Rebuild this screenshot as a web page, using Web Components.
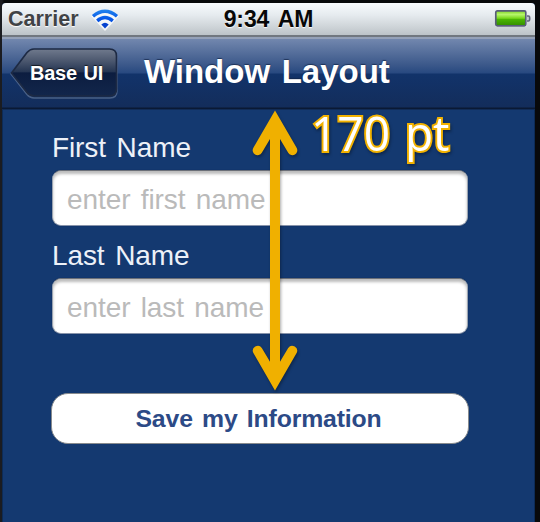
<!DOCTYPE html>
<html lang="en">
<head>
<meta charset="utf-8">
<title>Window Layout</title>
<style>
html,body{margin:0;height:100%;background:#08090b;overflow:hidden}
body{font-family:"Liberation Sans",Arial,sans-serif}
</style>
</head>
<body>
<phone-screen>
  <status-bar slot="status" carrier="Carrier" time="9:34 AM"></status-bar>
  <nav-bar slot="nav"><back-button slot="back">Base UI</back-button>Window Layout</nav-bar>
  <text-field label="First Name" hint="enter first name"></text-field>
  <text-field label="Last Name" hint="enter last name"></text-field>
  <action-button>Save my Information</action-button>
  <measure-arrow slot="overlay">170 pt</measure-arrow>
</phone-screen>
<script>
function define(name, html) {
  customElements.define(name, class extends HTMLElement {
    constructor() {
      super();
      const root = this.attachShadow({mode: "open"});
      const t = document.createElement("template");
      t.innerHTML = html;
      root.appendChild(t.content.cloneNode(true));
      root.querySelectorAll("[data-attr]").forEach(e => {
        e.textContent = this.getAttribute(e.dataset.attr);
      });
    }
  });
}

define("phone-screen", `<style>
:host{display:block;position:relative;box-sizing:border-box;width:540px;height:522px;padding:3px 5px 0 2px;background:linear-gradient(90deg,#1b1c20 0 2px,#08090b 4px)}
.screen{display:flex;flex-direction:column;height:519px;border-radius:4px 4px 0 0;overflow:hidden;background:#143970;box-shadow:inset 1px 0 #0d2b56,inset -1px 0 #0d2b56}
.form{display:flex;flex-direction:column;padding:20px 67px 0 50px}
</style>
<div class="screen"><slot name="status"></slot><slot name="nav"></slot><div class="form"><slot></slot></div></div><slot name="overlay"></slot>`);

define("status-bar", `<style>
:host{display:grid;grid-template-columns:1fr auto 1fr;align-items:center;box-sizing:border-box;height:34px;flex:none;padding:0 4px 2px 6px;background:linear-gradient(#f8fbfd 0,#e6ebef 35%,#ced4d8 70%,#bcc3c8 94%,#70777f 95%);font-weight:bold}
.left{display:flex;align-items:center;gap:11px}
.carrier{font-size:21.5px;line-height:30px;color:#414346;text-shadow:0 1px 1px #fff}
.time{font-size:23px;line-height:30px;letter-spacing:-.1px;word-spacing:3px;margin-right:2px;color:#080808;text-shadow:0 1px 1px #fff}
svg{display:block}
.battery{justify-self:end;margin-bottom:2px}
</style>
<div class="left"><span class="carrier" data-attr="carrier"></span>
<svg width="30" height="24" viewBox="0 0 30 24">
<defs><linearGradient id="w" x1="0" y1="2" x2="0" y2="22" gradientUnits="userSpaceOnUse"><stop stop-color="#2588ee"/><stop offset=".5" stop-color="#0657e8"/><stop offset="1" stop-color="#063fca"/></linearGradient></defs>
<path d="M1 9Q15-5 29 9L15 24Z" fill="#f7f9fb" opacity=".9"/>
<g fill="none" stroke="url(#w)" stroke-width="3.4"><path d="M3 9.200Q15-.8 27 9.200"/><path d="M7.200 13.900Q15 7.300 22.800 13.900"/></g>
<path d="M11.300 17.600Q15 14 18.700 17.600L15 21.500Z" fill="#0643d0"/></svg></div>
<span class="time" data-attr="time"></span>
<svg class="battery" width="37" height="20" viewBox="0 0 37 20">
<defs><linearGradient id="b" x1="0" y1="0" x2="0" y2="1"><stop stop-color="#7ed425"/><stop offset=".25" stop-color="#b6f56b"/><stop offset=".5" stop-color="#78d71b"/><stop offset=".57" stop-color="#4bb503"/><stop offset="1" stop-color="#348d00"/></linearGradient></defs>
<rect x="1" y="3" width="32" height="16" rx="2" fill="#fff" opacity=".6"/>
<rect x="1.8" y="2.8" width="30" height="15" rx="1.5" fill="url(#b)" stroke="#585d79" stroke-width="1.7"/>
<path d="M33 8h1.5q1.2 0 1.2 2.5t-1.2 2.5H33" fill="#c5cbd2" stroke="#62677c" stroke-width="1.6"/></svg>`);

define("nav-bar", `<style>
:host{display:flex;align-items:flex-start;box-sizing:border-box;height:73px;flex:none;padding:11px 0 0 8px;background:linear-gradient(#94a1b8 0 2px,#7287ae 2px,#3b588a 28px,#284980 36px,#12336a 37px,#132d5b 70px,#0a1934 71px 72px,#183e78 73px)}
.title{margin-left:24px;padding-top:5px;font-size:33px;line-height:38px;font-weight:bold;letter-spacing:-.02px;word-spacing:2.500px;white-space:nowrap;color:#fff;text-shadow:0 -1px 1px #102040b0}
</style><slot name="back"></slot><span class="title"><slot></slot></span>`);

define("back-button", `<style>
:host{display:grid;width:110px;height:52px}
svg,span{grid-area:1/1}
span{padding:14px 0 0 20px;font-size:20px;line-height:22px;font-weight:bold;letter-spacing:-.25px;word-spacing:1.500px;white-space:nowrap;color:#fff;text-shadow:0 -1px 1px #000a}
</style>
<svg width="110" height="52" viewBox="0 0 110 52">
<defs><linearGradient id="g" x1="0" y1="0" x2="0" y2="1"><stop stop-color="#707a8d"/><stop offset=".25" stop-color="#4c586f"/><stop offset=".48" stop-color="#263653"/><stop offset=".51" stop-color="#0c1d40"/><stop offset="1" stop-color="#12264b"/></linearGradient></defs>
<path d="M1 26 17 5Q20 1.7 24 1.7H100Q107 1.7 107 8.700V43Q107 50 100 50H24Q20 50 17 46.500Z" fill="none" stroke="#7f91ae" stroke-opacity=".5" stroke-width="1.5"/>
<path d="M1.500 25 17 4.500Q20 1 24 1H99.500Q106.500 1 106.500 8V41Q106.500 48 99.500 48H24Q20 48 17 44.500Z" fill="url(#g)" stroke="#1d2a44" stroke-width="1.7"/></svg>
<span><slot></slot></span>`);

define("text-field", `<style>
:host{display:flex;flex-direction:column;height:108px}
.label{height:40px;line-height:35px;font-size:28px;letter-spacing:-.1px;word-spacing:3px;color:#edf1f8}
.box{box-sizing:border-box;height:56px;padding-left:14px;line-height:57px;font-size:28px;word-spacing:2.500px;letter-spacing:-.07px;color:#bababa;background:#fff;border:1px solid;border-color:#6c7078 #9aa3b0 #8793aa;border-radius:9px;box-shadow:inset 0 3px 3px #0004,0 0 1px #082650}
</style><div class="label" data-attr="label"></div><div class="box" data-attr="hint"></div>`);

define("action-button", `<style>
:host{display:block;box-sizing:border-box;width:418px;height:51px;margin:47px 0 0 -1px;text-align:center;line-height:49px;font-size:24.8px;font-weight:bold;word-spacing:2.500px;letter-spacing:-.15px;color:#2c4a86;background:#fff;border:1.500px solid #888b8e;border-radius:17px;white-space:nowrap;padding-right:3px}
</style><slot></slot>`);

define("measure-arrow", `<style>
:host{position:absolute;left:250px;top:108px;display:flex;gap:11px;filter:drop-shadow(1px 2px 1.500px #0005)}
span{font:48px/50px "Open Sans","Noto Sans",sans-serif;color:#fff;-webkit-text-stroke:4px #f2b200;paint-order:stroke fill;white-space:nowrap;transform:scaleX(.96);transform-origin:0 0;word-spacing:3px}
</style>
<svg width="50" height="285" viewBox="0 0 50 285">
<path fill="#f0b000" d="M25 2.500 46.600 39.700A4.900 4.900 0 0 1 38.200 44.800L30 31V253.700L38.200 240A4.900 4.900 0 0 1 46.600 245L25 282.500 3.400 245A4.900 4.900 0 0 1 11.800 240L20 253.700V31L11.800 44.800A4.900 4.900 0 0 1 3.400 39.700Z"/></svg>
<span><slot></slot></span>`);
</script>
</body>
</html>
